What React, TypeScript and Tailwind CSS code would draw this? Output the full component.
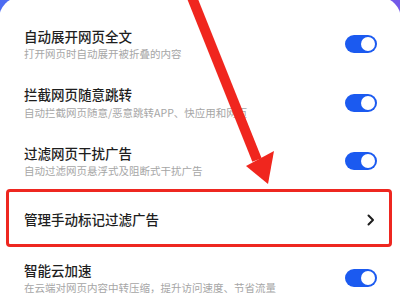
const rows = [
  { title: "自动展开网页全文", desc: "打开网页时自动展开被折叠的内容", toggle: true },
  { title: "拦截网页随意跳转", desc: "自动拦截网页随意/恶意跳转APP、快应用和网页", toggle: true },
  { title: "过滤网页干扰广告", desc: "自动过滤网页悬浮式及阻断式干扰广告", toggle: true },
  { title: "管理手动标记过滤广告", desc: "", toggle: false },
  { title: "智能云加速", desc: "在云端对网页内容中转压缩，提升访问速度、节省流量", toggle: true },
];

const Toggle = () => (
  <div className="w-[32px] h-[18px] rounded-full bg-[#1b5af0] flex items-center justify-end px-[2px] shrink-0">
    <div className="w-[14px] h-[14px] rounded-full bg-white" />
  </div>
);

export default function App() {
  return (
    <div
      className="relative w-[400px] h-[300px] overflow-hidden bg-gradient-to-r from-[#4d6cf2] to-[#7359e8]"
      style={{ fontFamily: '"Noto Sans CJK SC", "Noto Sans", sans-serif' }}
    >
      {/* Card */}
      <div className="-mt-[3px] -mx-[1px] h-[320px] bg-white rounded-t-[22px] pt-[18px]">
        {rows.map((row, i) => (
          <div key={i} className="relative h-[58.5px] flex items-center justify-between pl-[25px] pr-[24px]">
            <div className="flex flex-col gap-[2.5px]">
              <span className="text-[13.5px] leading-[17px] font-medium text-[#1e1e1e]">{row.title}</span>
              {row.desc && (
                <span className="text-[10.5px] leading-[14px] text-[#a6a6a6]">{row.desc}</span>
              )}
            </div>
            {row.toggle ? (
              <Toggle />
            ) : (
              <svg width="8" height="12" viewBox="0 0 8 12" className="mr-[2px]">
                <path d="M1.5 1.5 L6 6 L1.5 10.5" fill="none" stroke="#1e1e1e" strokeWidth="2" strokeLinecap="round" strokeLinejoin="round" />
              </svg>
            )}
            {!row.toggle && (
              <div className="absolute left-[7px] right-[9px] -top-[1.5px] bottom-[2px] border-[3.5px] border-[#ee2720] rounded-[4px]" />
            )}
          </div>
        ))}
      </div>

      {/* Annotation arrow */}
      <svg className="absolute inset-0 pointer-events-none" width="400" height="300" viewBox="0 0 400 300">
        <line x1="191" y1="-5" x2="257" y2="160" stroke="#f0261e" strokeWidth="10" />
        <polygon points="246,166 274,151 268,184" fill="#f0261e" />
      </svg>
    </div>
  );
}
